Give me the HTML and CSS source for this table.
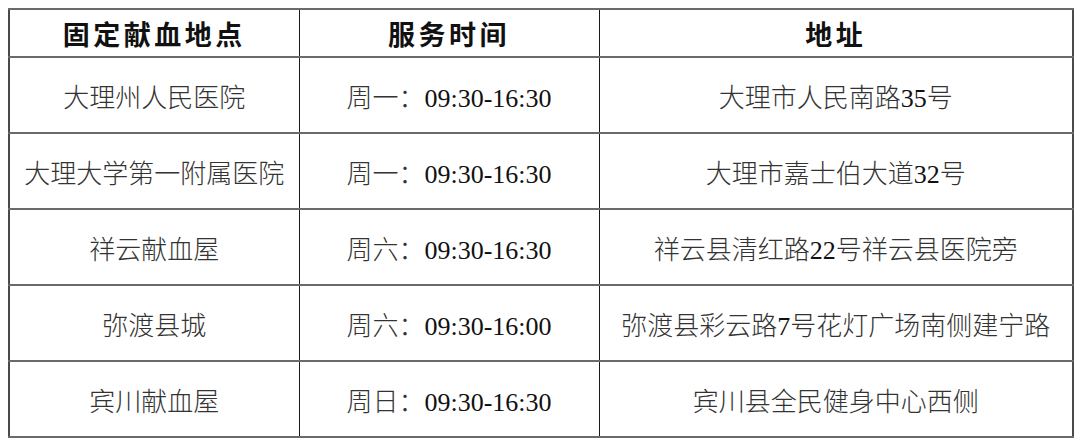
FILE: index.html
```html
<!DOCTYPE html>
<html lang="zh-CN">
<head>
<meta charset="utf-8">
<link rel="stylesheet" href="styles.css">
</head>
<body>
<table class="sched">
  <colgroup>
    <col class="c1"><col class="c2"><col class="c3">
  </colgroup>
  <thead>
    <tr class="head"><th>固定献血地点</th><th>服务时间</th><th>地址</th></tr>
  </thead>
  <tbody>
    <tr><td>大理州人民医院</td><td>周一：<span class="num">09:30-16:30</span></td><td>大理市人民南路<span class="num">35</span>号</td></tr>
    <tr><td>大理大学第一附属医院</td><td>周一：<span class="num">09:30-16:30</span></td><td>大理市嘉士伯大道<span class="num">32</span>号</td></tr>
    <tr><td>祥云献血屋</td><td>周六：<span class="num">09:30-16:30</span></td><td>祥云县清红路<span class="num">22</span>号祥云县医院旁</td></tr>
    <tr><td>弥渡县城</td><td>周六：<span class="num">09:30-16:00</span></td><td>弥渡县彩云路<span class="num">7</span>号花灯广场南侧建宁路</td></tr>
    <tr><td>宾川献血屋</td><td>周日：<span class="num">09:30-16:30</span></td><td>宾川县全民健身中心西侧</td></tr>
  </tbody>
</table>
</body>
</html>
```
FILE: styles.css
```css
html, body {
  margin: 0;
  padding: 0;
  background: #ffffff;
}
body {
  padding: 8px 0 0 8px;
}
.sched {
  border-collapse: collapse;
  table-layout: fixed;
  width: 1064px;
  border: 2px solid #4a4a4a;
  font-family: "Liberation Serif", "Noto Sans CJK SC", serif;
  color: #333333;
}
.c1 { width: 290px; }
.c2 { width: 300px; }
.c3 { width: 474px; }
.sched th, .sched td {
  border-top: 2px solid #6a6a6a;
  border-bottom: 2px solid #6a6a6a;
  border-left: 1px solid #1a1a1a;
  border-right: 1px solid #1a1a1a;
  text-align: center;
  vertical-align: middle;
  padding: 0;
}
.sched th {
  height: 46px;
  font-size: 27px;
  font-weight: 700;
  letter-spacing: 3.5px;
  color: #111;
}
.sched td {
  height: 74px;
  font-size: 26px;
  font-weight: 300;
}
.num {
  font-weight: 400;
  color: #111;
}
```
